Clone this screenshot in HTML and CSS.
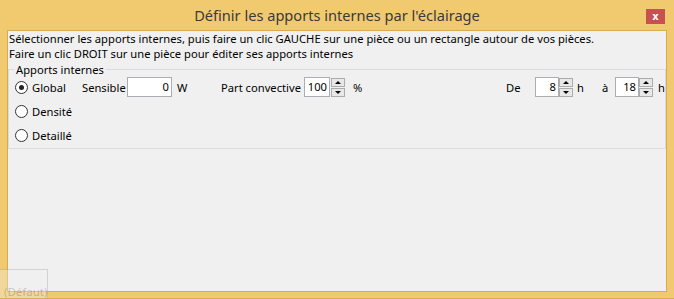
FILE: index.html
```html
<!DOCTYPE html>
<html lang="fr">
<head>
  <meta charset="UTF-8">
  <title>Définir les apports internes par l'éclairage</title>
  <link rel="stylesheet" href="styles.css">
</head>
<body>
  <div class="fenetre">
    <div class="titre">
      <span></span>
      <span class="titre-texte">Définir les apports internes par l'éclairage</span>
      <button class="fermer">x</button>
    </div>

    <div class="client">
      <p class="aide">Sélectionner les apports internes, puis faire un clic GAUCHE sur une pièce ou un rectangle autour de vos pièces.<br>Faire un clic DROIT sur une pièce pour éditer ses apports internes</p>

      <fieldset class="groupe">
        <legend>Apports internes</legend>
        <div class="corps">
          <div class="choix">
            <label class="radio"><span class="rond coche"></span>Global</label>
            <label class="radio"><span class="rond"></span>Densité</label>
            <label class="radio"><span class="rond"></span>Detaillé</label>
          </div>

          <div class="ligne">
            <span class="lbl l-sensible">Sensible</span>
            <span class="champ c-sensible">0</span>
            <span class="lbl l-w">W</span>
            <span class="lbl l-part">Part convective</span>
            <span class="champ c-part">100</span>
            <span class="spin"><i class="haut"></i><i class="bas"></i></span>
            <span class="lbl l-pct">%</span>
            <span class="lbl l-de">De</span>
            <span class="champ c-heure">8</span>
            <span class="spin"><i class="haut"></i><i class="bas"></i></span>
            <span class="lbl l-h">h</span>
            <span class="lbl l-a">à</span>
            <span class="champ c-heure">18</span>
            <span class="spin"><i class="haut"></i><i class="bas"></i></span>
            <span class="lbl l-h2">h</span>
          </div>
        </div>
      </fieldset>
    </div>

    <div class="defaut">(Défaut)</div>
  </div>
</body>
</html>
```

FILE: styles.css
```css
body {
  margin: 0;
  font-family: "Noto Sans", "Open Sans", sans-serif;
  font-size: 11.2px;
  color: #000;
}
.fenetre {
  position: relative;
  width: 674px;
  height: 299px;
  background-color: #f1ca6f;
  border-bottom: 1px solid #d9ae55;
  box-sizing: border-box;
  overflow: hidden;
}
.titre {
  height: 30px;
  display: grid;
  grid-template-columns: 1fr auto 1fr;
  align-items: start;
}
.titre-texte {
  font-family: "Noto Sans", sans-serif;
  font-size: 14.6px;
  color: #3a3a3a;
  margin-top: 6px;
  line-height: 18px;
}
.fermer {
  justify-self: end;
  margin: 9px 9px 0 0;
  width: 19px;
  height: 15px;
  padding: 0;
  border: none;
  background-color: #c75050;
  color: white;
  font-family: "DejaVu Sans", sans-serif;
  font-weight: bold;
  font-size: 10px;
  line-height: 13px;
}
.client {
  margin: 0 7px 0 7px;
  height: 262px;
  box-sizing: border-box;
  border: 1px solid #d6ab52;
  background-color: #f0f0f0;
}
.aide {
  margin: 0;
  padding-left: 1px;
  line-height: 15px;
}
.groupe {
  margin: 1px 0 0 0;
  padding: 0 0 1px 0;
  border: 1px solid #dcdcdc;
  min-width: 0;
}
.groupe legend {
  margin-left: 5px;
  padding: 0 2px;
  line-height: 15px;
}
.corps {
  display: flex;
  align-items: flex-start;
  margin-top: -2px;
}
.choix {
  width: 67px;
  margin-left: 6px;
  display: flex;
  flex-direction: column;
}
.radio {
  height: 24px;
  display: flex;
  align-items: center;
  gap: 4px;
}
.rond {
  width: 11px;
  height: 11px;
  border: 1px solid #333;
  border-radius: 50%;
  background-color: white;
  display: flex;
  align-items: center;
  justify-content: center;
}
.coche::after {
  content: "";
  width: 5px;
  height: 5px;
  border-radius: 50%;
  background-color: #222;
}
.ligne {
  height: 24px;
  display: flex;
  align-items: center;
}
.lbl {
  white-space: nowrap;
}
.l-sensible { width: 45px; }
.l-w { width: 44px; margin-left: 5px; }
.l-part { width: 83px; }
.l-pct { width: 153px; margin-left: 8px; }
.l-de { width: 29px; }
.l-h { width: 25px; margin-left: 4px; }
.l-a { width: 13px; }
.l-h2 { margin-left: 5px; }
.champ {
  height: 20px;
  box-sizing: border-box;
  border: 1px solid #abadb3;
  background-color: white;
  text-align: right;
  padding-right: 2px;
  line-height: 18px;
}
.c-sensible { width: 45px; }
.c-part { width: 26px; margin-right: 1px; }
.c-heure { width: 24px; }
.spin {
  width: 14px;
  height: 19px;
  display: flex;
  flex-direction: column;
  justify-content: space-between;
}
.spin i {
  height: 9px;
  box-sizing: border-box;
  border: 1px solid #acacac;
  background-color: #e8e8e8;
  display: flex;
  align-items: center;
  justify-content: center;
}
.spin .haut::after {
  content: "";
  border-left: 3px solid transparent;
  border-right: 3px solid transparent;
  border-bottom: 3px solid #000;
}
.spin .bas::after {
  content: "";
  border-left: 3px solid transparent;
  border-right: 3px solid transparent;
  border-top: 3px solid #000;
}
.defaut {
  position: absolute;
  left: -2px;
  top: 269px;
  width: 50px;
  height: 30px;
  border: 1px solid rgba(0, 0, 0, 0.12);
  border-bottom: none;
  background-color: rgba(240, 240, 240, 0.35);
  color: rgba(0, 0, 0, 0.2);
  padding: 14px 0 0 5px;
  box-sizing: border-box;
  font-size: 11.5px;
  line-height: 15px;
}
```
